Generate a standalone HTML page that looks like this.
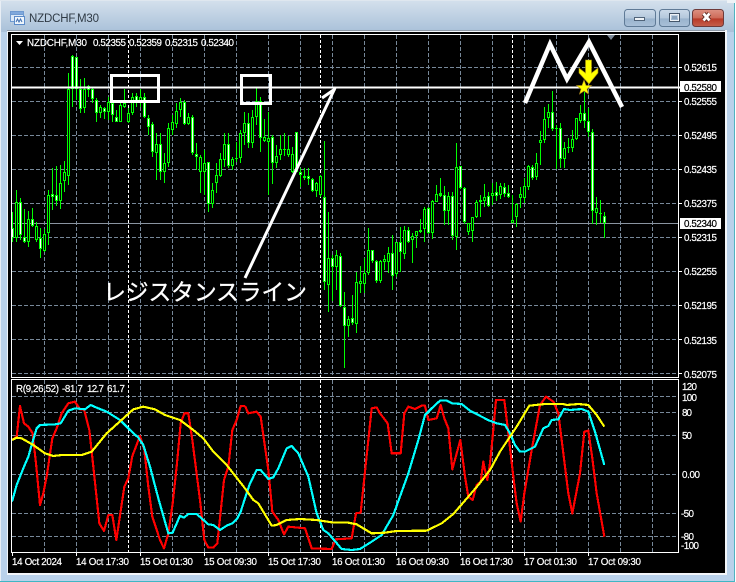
<!DOCTYPE html>
<html><head><meta charset="utf-8"><style>
html,body{margin:0;padding:0;background:#fff}
#w{position:relative;width:736px;height:582px;overflow:hidden;background:#b9d1ea}
svg{position:absolute;left:0;top:0}
text{font-family:"Liberation Sans",sans-serif;font-size:9.800px;fill:#fff;stroke:#fff;stroke-width:.2px}
</style></head><body><div id="w">
<svg width="736" height="582" viewBox="0 0 736 582" xmlns="http://www.w3.org/2000/svg">
<defs>
<linearGradient id="tb" x1="0" y1="0" x2="0" y2="1"><stop offset="0" stop-color="#d3e0ec"/><stop offset="1" stop-color="#a9c1d9"/></linearGradient>
<linearGradient id="bt" x1="0" y1="0" x2="0" y2="1"><stop offset="0" stop-color="#ccdaea"/><stop offset=".5" stop-color="#b4c8dc"/><stop offset=".55" stop-color="#9ab3cd"/><stop offset="1" stop-color="#a9c0d8"/></linearGradient>
<linearGradient id="cl" x1="0" y1="0" x2="0" y2="1"><stop offset="0" stop-color="#dd9283"/><stop offset=".5" stop-color="#cd6a58"/><stop offset=".55" stop-color="#b83a28"/><stop offset="1" stop-color="#c4604c"/></linearGradient>
</defs>
<rect x="0" y="0" width="736" height="582" fill="#b9d1ea"/>
<rect x="1" y="1" width="733" height="31" fill="url(#tb)"/>
<rect x="0" y="0" width="1" height="582" fill="#e8eef5"/>
<rect x="0" y="581" width="736" height="1" fill="#3fb6c4"/>
<rect x="734" y="0" width="1" height="582" fill="#4fb3c0"/>
<rect x="735" y="0" width="1" height="582" fill="#ffffff"/>
<rect x="0" y="0" width="736" height="1" fill="#dfe7ef"/>
<rect x="727" y="0" width="9" height="3" fill="#eef2f6"/>
<rect x="7" y="30" width="720" height="545" fill="#f2f5f9"/>
<rect x="7" y="30" width="718" height="1" fill="#8e99a6"/>
<rect x="8" y="32" width="717" height="541" fill="#000"/>

<!-- title icon -->
<rect x="10.500" y="11.500" width="13" height="10" fill="#dce9f7" stroke="#6f9ad0"/>
<rect x="10.500" y="11.500" width="13" height="3" fill="#7fa8dc" stroke="#6f9ad0"/>
<rect x="14.500" y="16.500" width="10" height="8" fill="#eef5fc" stroke="#5b8bc9"/>
<path d="M16 22l1.500-3 1.500 3 1.500-3 1.500 3" fill="none" stroke="#3f6fb0"/>
<text x="29" y="22" textLength="70" style="font-size:11.500px;fill:#2f3a45;stroke:none">NZDCHF,M30</text>

<!-- buttons -->
<rect x="624.500" y="9.500" width="31" height="17" rx="3" fill="url(#bt)" stroke="#5f7a96"/>
<rect x="659.500" y="9.500" width="30" height="17" rx="3" fill="url(#bt)" stroke="#5f7a96"/>
<rect x="692.500" y="9.500" width="31" height="17" rx="3" fill="url(#cl)" stroke="#6e3a3a"/>
<rect x="634.500" y="17.500" width="10" height="3" fill="#eef2f6" stroke="#51647a"/>
<rect x="669.500" y="13.500" width="10" height="8" fill="none" stroke="#44566b"/>
<rect x="670.500" y="14.500" width="8" height="6" fill="none" stroke="#eef2f6"/>
<rect x="672" y="16" width="5" height="3" fill="#8aa3bd"/>
<path d="M703.500 13.500l6 7M709.500 13.500l-6 7" stroke="#5c2a22" stroke-width="4.500" fill="none"/>
<path d="M703.500 13.500l6 7M709.500 13.500l-6 7" stroke="#fff" stroke-width="2.800" fill="none"/>

<!-- grid -->
<g shape-rendering="crispEdges" fill="none" stroke="#778899" stroke-dasharray="4 2">
<path d="M12 67.500H678M12 101.500H678M12 135.500H678M12 169.500H678M12 203.500H678M12 237.500H678M12 271.500H678M12 305.500H678M12 339.500H678M12 373.500H678"/>
<path d="M12 396.500H678M12 412.500H678M12 435.500H678M12 474.500H678M12 513.500H678M12 536.500H678"/>
<path d="M44.500 35V377M76.500 35V377M108.500 35V377M140.500 35V377M172.500 35V377M204.500 35V377M236.500 35V377M268.500 35V377M300.500 35V377M332.500 35V377M364.500 35V377M396.500 35V377M428.500 35V377M460.500 35V377M492.500 35V377M524.500 35V377M556.500 35V377M588.500 35V377M620.500 35V377M652.500 35V377"/>
<path d="M44.500 380V552M76.500 380V552M108.500 380V552M140.500 380V552M172.500 380V552M204.500 380V552M236.500 380V552M268.500 380V552M300.500 380V552M332.500 380V552M364.500 380V552M396.500 380V552M428.500 380V552M460.500 380V552M492.500 380V552M524.500 380V552M556.500 380V552M588.500 380V552M620.500 380V552M652.500 380V552"/>
</g>
<g shape-rendering="crispEdges" fill="none" stroke="#fff" stroke-dasharray="3 2">
<path d="M128.500 35V552M320.500 35V552M512.500 35V552"/>
</g>
<path d="M12 223.500H678" stroke="#8a94a0" shape-rendering="crispEdges"/>

<!-- candles -->
<g shape-rendering="crispEdges" fill="none">
<path stroke="#00ff00" d="M12.500 212V242M16.500 190V242M20.500 198V240M24.500 209V243M28.500 211V247M32.500 208V227M36.500 222V242M40.500 228V258M44.500 229V252M48.500 190V245M52.500 168V210M56.500 166V206M60.500 165V209M64.500 161V192M68.500 73V185M72.500 55V107M76.500 57V100M80.500 79V113M84.500 78V113M88.500 85V97M92.500 87V103M96.500 98V122M100.500 105V118M104.500 107V119M108.500 97V120M112.500 100V122M116.500 110V122M120.500 100V122M124.500 89V108M128.500 108V123M132.500 93V115M136.500 93V107M140.500 89V107M144.500 93V118M148.500 115V135M152.500 122V157M156.500 133V180M160.500 133V180M164.500 153V183M168.500 123V167M172.500 115V135M176.500 103V128M180.500 98V117M184.500 100V125M188.500 113V125M192.500 115V155M196.500 143V170M200.500 155V193M204.500 150V195M208.500 162V212M212.500 183V208M216.500 163V193M220.500 153V177M224.500 133V167M228.500 133V168M232.500 157V170M236.500 142V162M240.500 130V163M244.500 112V145M248.500 113V148M252.500 110V148M256.500 88V125M260.500 97V152M264.500 119V142M268.500 112V195M272.500 135V184M276.500 145V168M280.500 135V160M284.500 133V156M288.500 136V157M292.500 147V173M296.500 132V172M300.500 168V187M304.500 168V180M308.500 168V185M312.500 178V192M316.500 182V197M320.500 175V197M324.500 141V290M328.500 212V312M332.500 255V301M336.500 250V290M340.500 253V307M344.500 292V368M348.500 316V337M352.500 295V325M356.500 272V333M360.500 266V293M364.500 258V293M368.500 228V275M372.500 250V263M376.500 260V283M380.500 260V283M384.500 255V270M388.500 247V273M392.500 235V290M396.500 242V277M400.500 227V272M404.500 226V259M408.500 227V243M412.500 233V263M416.500 232V248M420.500 219V233M424.500 207V242M428.500 207V234M432.500 200V239M436.500 185V202M440.500 178V197M444.500 186V225M448.500 192V225M452.500 192V240M456.500 143V250M460.500 166V189M464.500 187V224M468.500 223V235M472.500 217V242M476.500 200V218M480.500 195V217M484.500 184V207M488.500 192V207M492.500 183V205M496.500 182V201M500.500 183V199M504.500 183V197M508.500 185V198M512.500 195V223M516.500 203V227M520.500 187V208M524.500 178V203M528.500 165V190M532.500 165V180M536.500 153V180M540.500 131V165M544.500 107V143M548.500 104V128M552.500 91V131M556.500 125V169M560.500 123V168M564.500 142V168M568.500 138V153M572.500 130V152M576.500 118V140M580.500 105V123M584.500 92V128M588.500 108V137M592.500 129V224M596.500 197V225M600.500 200V223M604.500 212V238"/>
<path stroke="#00ff00" stroke-width="3" d="M12.500 228V238M16.500 202V238M20.500 202V235M24.500 237V242M28.500 219V242M32.500 219V226M36.500 226V240M40.500 238V249M44.500 234V251M48.500 195V233M52.500 194V197M56.500 195V201M60.500 183V201M64.500 172V181M68.500 89V176M72.500 56V89M76.500 57V89M80.500 89V109M84.500 89V108M88.500 86V90M92.500 89V99M96.500 100V113M100.500 107V113M104.500 108V112M108.500 102V112M112.500 103V115M116.500 117V122M120.500 105V122M124.500 103V107M128.500 113V122M132.500 97V113M136.500 96V103M140.500 97V103M144.500 97V117M148.500 118V127M152.500 124V152M156.500 144V153M160.500 144V172M164.500 163V172M168.500 128V163M172.500 122V130M176.500 111V124M180.500 102V110M184.500 102V124M188.500 117V124M192.500 117V153M196.500 154V157M200.500 157V172M204.500 163V172M208.500 162V204M212.500 190V204M216.500 175V183M220.500 159V176M224.500 144V160M228.500 144V166M232.500 159V166M236.500 158V159M240.500 133V158M244.500 123V133M248.500 123V143M252.500 117V143M256.500 101V117M260.500 101V138M264.500 137V141M268.500 138V142M272.500 137V163M276.500 156V163M280.500 149V155M284.500 149V150M288.500 149V155M292.500 154V172M296.500 132V172M300.500 172V175M304.500 176V178M308.500 176V179M312.500 179V191M316.500 183V191M320.500 176V195M324.500 197V282M328.500 258V285M332.500 258V267M336.500 255V267M340.500 256V306M344.500 307V326M348.500 319V326M352.500 318V323M356.500 282V324M360.500 281V284M364.500 273V284M368.500 250V273M372.500 250V261M376.500 261V281M380.500 261V281M384.500 259V262M388.500 253V262M392.500 253V276M396.500 242V274M400.500 242V252M404.500 230V254M408.500 230V242M412.500 236V240M416.500 231V236M420.500 230V232M424.500 209V229M428.500 208V233M432.500 201V233M436.500 194V202M440.500 193V196M444.500 195V211M448.500 196V211M452.500 196V236M456.500 167V237M460.500 166V188M464.500 188V222M468.500 223V232M472.500 217V231M476.500 202V217M480.500 200V202M484.500 197V201M488.500 196V206M492.500 193V196M496.500 192V196M500.500 186V195M504.500 187V194M508.500 193V197M512.500 220V223M516.500 204V217M520.500 194V198M524.500 186V198M528.500 166V187M532.500 167V178M536.500 163V177M540.500 140V143M544.500 119V140M548.500 112V118M552.500 112V129M556.500 128V129M560.500 128V159M564.500 148V159M568.500 147V148M572.500 139V148M576.500 118V139M580.500 113V121M584.500 113V121M588.500 121V132M592.500 132V211M596.500 208V213M600.500 213V214M604.500 216V223"/>
<path stroke="#000" d="M16.500 203V237M28.500 220V241M36.500 227V239M44.500 235V250M48.500 196V232M60.500 184V200M64.500 173V180M68.500 90V175M84.500 90V107M100.500 108V112M108.500 103V111M120.500 106V121M124.500 104V106M128.500 114V121M132.500 98V112M140.500 98V102M156.500 145V152M164.500 164V171M168.500 129V162M172.500 123V129M176.500 112V123M180.500 103V109M188.500 118V123M200.500 158V171M204.500 164V171M212.500 191V203M216.500 176V182M220.500 160V175M224.500 145V159M232.500 160V165M240.500 134V157M244.500 124V132M252.500 118V142M256.500 102V116M264.500 138V140M268.500 139V141M276.500 157V162M280.500 150V154M288.500 150V154M292.500 155V171M316.500 184V190M320.500 177V194M328.500 259V284M336.500 256V266M348.500 320V325M356.500 283V323M360.500 282V283M364.500 274V283M368.500 251V272M380.500 262V280M384.500 260V261M388.500 254V261M396.500 243V273M404.500 231V253M412.500 237V239M416.500 232V235M424.500 210V228M432.500 202V232M436.500 195V201M448.500 197V210M456.500 168V236M468.500 224V231M472.500 218V230M476.500 203V216M484.500 198V200M492.500 194V195M500.500 187V194M512.500 221V222M516.500 205V216M520.500 195V197M524.500 187V197M528.500 167V186M536.500 164V176M540.500 141V142M544.500 120V139M548.500 113V117M564.500 149V158M572.500 140V147M576.500 119V138M580.500 114V120M596.500 209V212"/>
<path stroke="#fff" d="M12.500 229V237M20.500 203V234M24.500 238V241M32.500 220V225M40.500 239V248M52.500 195V196M56.500 196V200M72.500 57V88M76.500 58V88M80.500 90V108M88.500 87V89M92.500 90V98M96.500 101V112M104.500 109V111M112.500 104V114M116.500 118V121M136.500 97V102M144.500 98V116M148.500 119V126M152.500 125V151M160.500 145V171M184.500 103V123M192.500 118V152M196.500 155V156M208.500 163V203M228.500 145V165M248.500 124V142M260.500 102V137M272.500 138V162M296.500 133V171M300.500 173V174M308.500 177V178M312.500 180V190M324.500 198V281M332.500 259V266M340.500 257V305M344.500 308V325M352.500 319V322M372.500 251V260M376.500 262V280M392.500 254V275M400.500 243V251M408.500 231V241M428.500 209V232M444.500 196V210M452.500 197V235M460.500 167V187M464.500 189V221M488.500 197V205M496.500 193V195M504.500 188V193M508.500 194V196M532.500 168V177M552.500 113V128M560.500 129V158M584.500 114V120M588.500 122V131M592.500 133V210M604.500 217V222"/>
</g>

<!-- indicator -->
<g fill="none" stroke-width="6.500" stroke-linejoin="round" shape-rendering="crispEdges">
<g stroke="#ff0000">
<polyline transform="translate(0 370) scale(.33333)" points="36,210 50,200 60,108 72,160 85,170 98,190 108,280 120,405 130,370 140,320 157,205 170,175 185,130 205,100 225,95 240,118 252,118 268,180 280,290 298,460 312,483 325,435 337,435 349,510 373,350 385,325 397,258 420,198 433,240 445,350 457,440 480,510 492,535 505,490 518,400 530,290 542,160 553,130 565,130 577,210 600,390 613,510 625,533 640,533 652,520 672,330 685,290 697,180 710,150 722,108 735,108"/>
<polyline transform="translate(245 370) scale(.33333)" points="0,108 10,130 35,125 47,140 70,300 82,425 100,450 117,493 130,470 180,475 200,535 260,537 272,508 320,505 333,430 347,428 380,115 395,112 405,130 428,160 440,250 467,250 478,130 490,110 510,117 530,107 540,107 550,150 575,145 587,105 598,145 610,175 622,298 646,210 660,320 670,380 683,390 695,345 707,335 715,275 720,300 727,330 735,280"/>
<polyline transform="translate(490 370) scale(.33333)" points="0,280 8,200 18,90 43,90 55,190 70,320 80,400 92,455 103,370 125,240 150,105 168,80 190,95 205,130 235,370 247,430 270,310 283,185 295,182 307,265 320,370 343,500"/>
</g>
<g stroke="#00ffff">
<polyline transform="translate(0 370) scale(.33333)" points="36,395 50,345 72,290 85,260 95,225 110,175 120,165 165,163 182,160 205,122 225,115 255,118 272,105 290,113 320,125 360,150 390,180 415,203 430,225 450,290 475,385 505,490 518,488 540,437 552,443 565,432 590,432 625,463 640,465 660,480 680,467 697,460 712,445 722,425 735,385"/>
<polyline transform="translate(245 370) scale(.33333)" points="0,385 15,340 35,300 47,300 70,327 85,322 100,295 125,235 140,228 160,250 190,320 215,430 235,480 250,490 290,537 320,540 345,537 380,515 410,495 445,435 490,310 520,210 540,135 560,115 585,92 605,92 622,100 650,102 675,122 735,153"/>
<polyline transform="translate(490 370) scale(.33333)" points="0,152 20,160 45,165 60,190 75,225 90,245 105,245 135,230 160,175 175,168 185,150 205,148 222,117 240,120 275,117 295,125 315,185 343,285"/>
</g>
<g stroke="#ffff00">
<polyline transform="translate(0 370) scale(.33333)" points="36,210 50,203 65,205 100,225 135,250 160,258 185,255 245,255 275,245 320,190 370,145 400,118 430,110 465,118 495,135 540,150 580,180 610,205 640,245 680,285 735,355"/>
<polyline transform="translate(245 370) scale(.33333)" points="0,355 25,390 40,400 80,467 95,465 125,450 165,447 215,450 260,457 310,458 335,463 380,490 420,488 455,483 545,482 590,460 625,432 670,380 700,345 735,300"/>
<polyline transform="translate(490 370) scale(.33333)" points="0,300 30,245 50,215 80,170 118,107 165,102 220,102 230,105 265,102 295,105 320,135 343,170"/>
</g>
</g>

<!-- frames -->
<g fill="none" stroke="#fff" shape-rendering="crispEdges">
<rect x="11.500" y="34.500" width="667" height="343"/>
<rect x="11.500" y="379.500" width="667" height="173"/>
<path d="M12.500 552V556M76.500 552V556M140.500 552V556M204.500 552V556M268.500 552V556M332.500 552V556M396.500 552V556M460.500 552V556M524.500 552V556M588.500 552V556"/>
<path d="M678 67.500H682M678 101.500H682M678 135.500H682M678 169.500H682M678 203.500H682M678 237.500H682M678 271.500H682M678 305.500H682M678 339.500H682M678 373.500H682"/>
</g>

<!-- objects -->
<path d="M12 87.500H680" stroke="#fff" stroke-width="2" shape-rendering="crispEdges"/>
<g fill="none" stroke="#fff" stroke-width="3" shape-rendering="crispEdges">
<rect x="111.500" y="75.500" width="47" height="26"/>
<rect x="241.500" y="75.500" width="29" height="28"/>
</g>
<path d="M245 278L335 88M322 98L335 89" fill="none" stroke="#fff" stroke-width="3"/>
<polyline points="525,103 550,44 567,79 589,42 622,107" fill="none" stroke="#fff" stroke-width="4.500" stroke-linejoin="miter"/>
<polygon points="607,35 615,35 611,40" fill="#7a8796"/>
<polygon points="585.500,60 591.500,60 591.500,73 598,68 598,73 589,84 579,73 579,68 585.500,73" fill="#ffff00" stroke="#a88a10" stroke-width=".6"/>
<polygon points="584,80 586,85.500 591.500,85.500 587,89 588.500,94 584,91 579.500,94 581,89 576.500,85.500 582,85.500" fill="#ffff00" stroke="#b08a20" stroke-width=".6"/>

<!-- texts -->
<polygon points="16,41 23,41 19.500,45" fill="#fff"/>
<text x="27" y="46" textLength="60">NZDCHF,M30</text>
<text x="93" y="46" textLength="33">0.52355</text>
<text x="129" y="46" textLength="33">0.52359</text>
<text x="165" y="46" textLength="33">0.52315</text>
<text x="201" y="46" textLength="33">0.52340</text>
<text x="16" y="392" textLength="43">R(9,26,52)</text>
<text x="62" y="392" textLength="21">-81.7</text>
<text x="87" y="392" textLength="17">12.7</text>
<text x="107" y="392" textLength="18">61.7</text>

<g>
<text x="684" y="71" textLength="33">0.52615</text>
<rect x="680" y="81" width="41" height="11" fill="#fff"/>
<text x="684" y="91" textLength="33" style="fill:#000;stroke:#000">0.52580</text>
<text x="684" y="105" textLength="33">0.52555</text>
<text x="684" y="139" textLength="33">0.52495</text>
<text x="684" y="173" textLength="33">0.52435</text>
<text x="684" y="207" textLength="33">0.52375</text>
<rect x="680" y="218" width="41" height="11" fill="#fff"/>
<text x="684" y="227" textLength="33" style="fill:#000;stroke:#000">0.52340</text>
<text x="684" y="241" textLength="33">0.52315</text>
<text x="684" y="275" textLength="33">0.52255</text>
<text x="684" y="309" textLength="33">0.52195</text>
<text x="684" y="344" textLength="33">0.52135</text>
<text x="684" y="378" textLength="33">0.52075</text>
<text x="682" y="390" textLength="15">120</text>
<text x="682" y="401" textLength="15">100</text>
<text x="682" y="416" textLength="10">80</text>
<text x="682" y="439" textLength="10">50</text>
<text x="682" y="478" textLength="18">0.00</text>
<text x="681" y="517" textLength="13">-50</text>
<text x="681" y="540" textLength="13">-80</text>
<text x="681" y="549" textLength="18">-100</text>
</g>
<text x="12" y="565" textLength="50">14 Oct 2024</text>
<text x="76" y="565" textLength="53">14 Oct 17:30</text>
<text x="140" y="565" textLength="53">15 Oct 01:30</text>
<text x="204" y="565" textLength="53">15 Oct 09:30</text>
<text x="268" y="565" textLength="53">15 Oct 17:30</text>
<text x="332" y="565" textLength="53">16 Oct 01:30</text>
<text x="396" y="565" textLength="53">16 Oct 09:30</text>
<text x="460" y="565" textLength="53">16 Oct 17:30</text>
<text x="524" y="565" textLength="53">17 Oct 01:30</text>
<text x="588" y="565" textLength="53">17 Oct 09:30</text>
<text x="103" y="300" textLength="204" style="font-family:'Liberation Sans','Noto Sans CJK JP',sans-serif;font-size:23px;stroke-width:.3px">レジスタンスライン</text>
</svg>
</div></body></html>
